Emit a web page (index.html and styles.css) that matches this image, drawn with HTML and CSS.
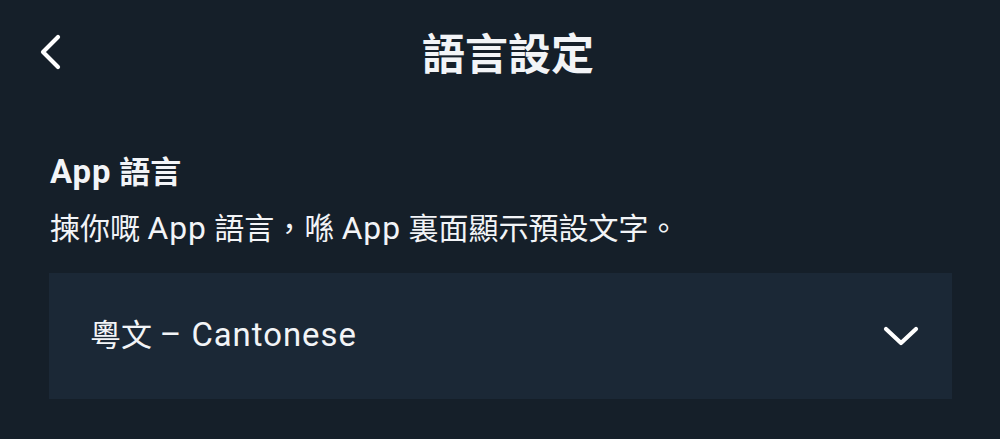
FILE: index.html
```html
<!DOCTYPE html>
<html lang="zh-Hant">
<head>
<meta charset="utf-8">
<title>語言設定</title>
<link rel="stylesheet" href="styles.css">
</head>
<body>
<header class="topbar">
  <button class="back" aria-label="返回">
    <svg width="22" height="36" viewBox="0 0 22 36"><polyline points="19,3 4,18 19,33" fill="none" stroke="#ffffff" stroke-width="4.2" stroke-linecap="round" stroke-linejoin="round"/></svg>
  </button>
  <h1 class="title">語言設定</h1>
  <div class="spacer"></div>
</header>
<main class="content">
  <h2 class="heading"><span class="lat">App</span> 語言</h2>
  <p class="desc">揀你嘅 <span class="lat">App</span> 語言，喺 <span class="lat">App</span> 裏面顯示預設文字。</p>
  <div class="select">
    <span class="select-value">粵文 <span class="lat">– Cantonese</span></span>
    <svg class="chev" width="36" height="20" viewBox="0 0 36 20"><polyline points="3,3 18,17 33,3" fill="none" stroke="#ffffff" stroke-width="4.2" stroke-linecap="round" stroke-linejoin="round"/></svg>
  </div>
</main>
</body>
</html>
```
FILE: styles.css
```css
html, body {
  margin: 0;
  padding: 0;
  background: #151f29;
  color: #f2f4f7;
  font-family: Roboto, "Noto Sans CJK TC", sans-serif;
}
.topbar {
  height: 104px;
  display: grid;
  grid-template-columns: 1fr auto 1fr;
  align-items: center;
}
.back {
  justify-self: start;
  margin-left: 39px;
  padding: 0;
  background: none;
  border: 0;
  display: flex;
}
.title {
  margin: 0 0 0 16px;
  font-size: 43px;
  font-weight: 700;
  line-height: 1.2;
  font-family: "Noto Sans CJK TC", sans-serif;
}
.content {
  padding: 0 48px 0 50px;
}
.lat {
  font-family: Roboto, sans-serif;
  font-size: 1.06em;
  letter-spacing: 0.03em;
  line-height: 1;
}
.heading {
  margin: 51px 0 0;
  font-size: 31px;
  line-height: 36px;
  font-weight: 700;
}
.desc {
  margin: 20px 0 0;
  font-size: 30px;
  line-height: 36px;
  font-weight: 400;
}
.select {
  margin-top: 26px;
  height: 126px;
  background: #1b2836;
  display: flex;
  align-items: center;
  justify-content: space-between;
  padding: 0 33px 0 41px;
  margin-left: -1px;
}
.select-value {
  font-size: 31px;
  line-height: 36px;
}
.chev {
  display: block;
}
```
